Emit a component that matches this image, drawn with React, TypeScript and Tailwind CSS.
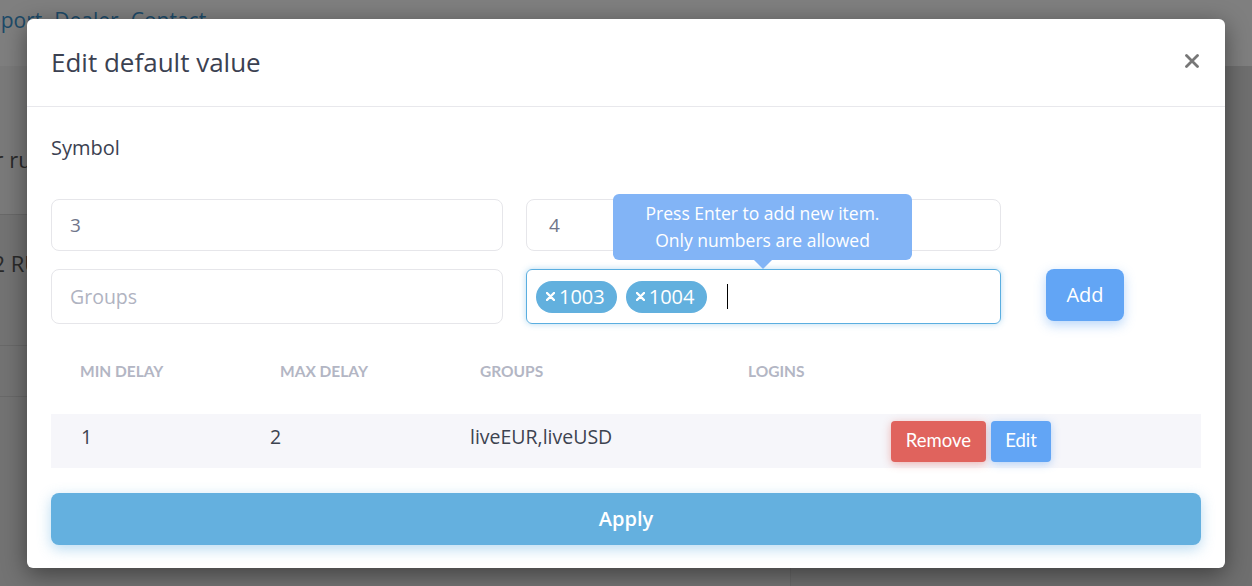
import { useState } from 'react'

function Chip({ label }: { label: string }) {
  return (
    <span className="flex h-[32px] items-center gap-[4px] rounded-full bg-[#62b0de] pl-[10px] pr-[12px] text-[20px] text-white">
      <svg width="9" height="9" viewBox="0 0 9 9">
        <path d="M1 1L8 8M8 1L1 8" stroke="white" strokeWidth="2.4" strokeLinecap="round" />
      </svg>
      {label}
    </span>
  )
}

function App() {
  const [tags] = useState(['1003', '1004'])

  return (
    <div className="relative h-[586px] w-[1252px] overflow-hidden bg-[#e4e4e4] font-['Open_Sans',sans-serif]">
      {/* page under the modal */}
      <header className="flex h-[66px] items-start gap-[12px] bg-white pt-[5px] text-[21px] text-[#3d95d1]">
        <span className="-ml-[24px]">Report</span>
        <span>Dealer</span>
        <span>Contact</span>
      </header>
      <div className="flex h-[520px]">
        <div className="flex w-[790px] flex-col bg-[#e6e6e6]">
          <div className="flex h-[149px] items-end border-b border-[#d2d2d2] bg-[#f4f4f4] pb-[38px] text-[22px] text-[#555]">
            <span className="-ml-[64px]">Dealer rules</span>
          </div>
          <div className="flex h-[130px] items-start pt-[32px] text-[22px] text-[#555]">
            <span className="-ml-[66px]">Level 2 RULES</span>
          </div>
          <div className="h-[52px] border-y border-[#d2d2d2]" />
        </div>
        <div className="flex-1 border-l border-[#d0d0d0] bg-[#dedede]" />
      </div>

      <div className="absolute inset-0 bg-black/50" />

      {/* modal */}
      <div className="absolute left-[27px] top-[19px] flex h-[549px] w-[1198px] flex-col rounded-[6px] bg-white shadow-[0_6px_24px_rgba(0,0,0,0.45)]">
        <div className="flex h-[88px] items-center justify-between border-b border-[#e8e8ec] pl-[24px] pr-[26px]">
          <h2 className="text-[26px] text-[#3b4151]">Edit default value</h2>
          <svg width="14" height="14" viewBox="0 0 14 14" className="mt-[-4px]">
            <path d="M1.5 1.5L12.5 12.5M12.5 1.5L1.5 12.5" stroke="#777" strokeWidth="2.8" strokeLinecap="round" />
          </svg>
        </div>

        <div className="flex flex-1 flex-col px-[24px] pt-[27px]">
          <p className="text-[20px] leading-[27px] text-[#3b4151]">Symbol</p>

          <div className="mt-[38px] flex gap-[23px]">
            <div className="flex h-[52px] w-[452px] items-center rounded-[8px] border border-[#e6e6ea] px-[18px] text-[19px] text-[#70758a]">
              3
            </div>
            <div className="flex h-[52px] w-[475px] items-center rounded-[8px] border border-[#e6e6ea] px-[22px] text-[19px] text-[#70758a]">
              4
            </div>
          </div>

          <div className="mt-[18px] flex items-start gap-[23px]">
            <div className="flex h-[55px] w-[452px] items-center rounded-[8px] border border-[#e6e6ea] px-[18px] text-[19.5px] text-[#b0b3c1]">
              Groups
            </div>
            <div className="relative flex h-[55px] w-[475px] items-center gap-[9px] rounded-[6px] border border-[#5aaee0] pl-[9px] shadow-[0_0_6px_rgba(90,174,224,0.45)]">
              {tags.map((t) => (
                <Chip key={t} label={t} />
              ))}
              <span className="ml-[11px] h-[25px] w-[1.5px] bg-black" />
              <div className="absolute bottom-[calc(100%+10px)] left-[86px] w-[299px] rounded-[6px] bg-[#82b4f6] py-[6px] text-center text-[17.5px] leading-[27px] text-white">
                Press Enter to add new item.
                <br />
                Only numbers are allowed
                <span className="absolute left-[141px] top-full h-0 w-0 border-x-[9px] border-t-[9px] border-x-transparent border-t-[#82b4f6]" />
              </div>
            </div>
            <button className="ml-[22px] h-[52px] w-[78px] rounded-[8px] bg-[#62a5f5] text-[20px] text-white shadow-[0_4px_12px_rgba(98,165,245,0.45)]">
              Add
            </button>
          </div>

          <div className="grid grid-cols-[200px_200px_268px_1fr] pt-[37px] pb-[32px] font-['Lato',sans-serif] text-[15.5px] leading-[21px] font-bold text-[#b3b6c4]">
            <span className="pl-[29px]">MIN DELAY</span>
            <span className="pl-[29px]">MAX DELAY</span>
            <span className="pl-[29px]">GROUPS</span>
            <span className="pl-[29px]">LOGINS</span>
          </div>

          <div className="flex h-[54px] items-center bg-[#f6f6fa] text-[19.5px] text-[#3d4350]">
            <span className="w-[219px] pb-[8px] pl-[30px]">1</span>
            <span className="w-[200px] pb-[8px]">2</span>
            <span className="w-[421px] pb-[8px]">liveEUR,liveUSD</span>
            <div className="flex gap-[5px] font-['Lato',sans-serif] text-[18.5px] text-white">
              <button className="h-[41px] w-[95px] rounded-[4px] bg-[#e0635d] shadow-[0_2px_8px_rgba(224,99,93,0.45)]">
                Remove
              </button>
              <button className="h-[41px] w-[60px] rounded-[4px] bg-[#62a5f5] shadow-[0_2px_8px_rgba(98,165,245,0.45)]">
                Edit
              </button>
            </div>
          </div>

          <button className="mt-[25px] h-[52px] w-full rounded-[8px] bg-[#64b0df] text-[20px] font-semibold text-white shadow-[0_4px_14px_rgba(100,176,223,0.45)]">
            Apply
          </button>
        </div>
      </div>
    </div>
  )
}

export default App
